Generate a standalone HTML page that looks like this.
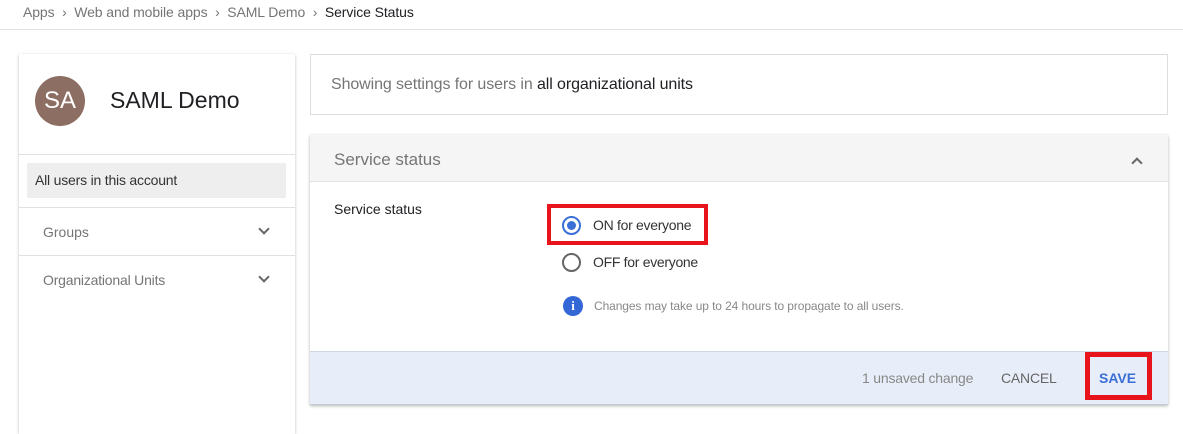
<!DOCTYPE html>
<html><head><style>
*{box-sizing:border-box;margin:0;padding:0}
body{width:1183px;height:420px;overflow:hidden;background:#fff;font-family:"Liberation Sans",sans-serif;position:relative}
.a{position:absolute;white-space:nowrap}
.g{color:#757575}
.chev{position:absolute;width:8px;height:8px;border-right:2px solid #666;border-bottom:2px solid #666;transform:rotate(45deg)}
</style></head><body>
<div class="a" style="left:23px;top:4px;font-size:14px;color:#757575;letter-spacing:-0.1px">Apps&nbsp;&nbsp;›&nbsp;&nbsp;Web and mobile apps&nbsp;&nbsp;›&nbsp;&nbsp;SAML Demo&nbsp;&nbsp;›&nbsp;&nbsp;<span style="color:#202124">Service Status</span></div>
<div class="a" style="left:0;top:29px;width:1183px;height:1px;background:#e0e0e0"></div>

<div class="a" style="left:19px;top:54px;width:276px;height:380px;background:#fff;box-shadow:0 1px 3px rgba(0,0,0,.25)"></div>
<div class="a" style="left:35px;top:76px;width:50px;height:50px;border-radius:50%;background:#8d6e63;color:#fff;font-size:24px;line-height:50px;text-align:center">SA</div>
<div class="a" style="left:110px;top:87px;font-size:23px;color:#202124">SAML Demo</div>
<div class="a" style="left:19px;top:154px;width:276px;height:1px;background:#e0e0e0"></div>
<div class="a" style="left:27px;top:163px;width:259px;height:35px;background:#eeeeee;font-size:14px;color:#333;line-height:35px;padding-left:8px;letter-spacing:-0.2px">All users in this account</div>
<div class="a" style="left:19px;top:207px;width:276px;height:1px;background:#e0e0e0"></div>
<div class="a g" style="left:43px;top:224px;font-size:14px">Groups</div>
<div class="chev" style="left:260px;top:225px"></div>
<div class="a" style="left:19px;top:255px;width:276px;height:1px;background:#e0e0e0"></div>
<div class="a g" style="left:43px;top:272px;font-size:14px;letter-spacing:-0.2px">Organizational Units</div>
<div class="chev" style="left:260px;top:273px"></div>

<div class="a" style="left:310px;top:54px;width:858px;height:61px;border:1px solid #ddd"></div>
<div class="a" style="left:331px;top:76px;font-size:16px;color:#757575;letter-spacing:-0.1px">Showing settings for users in <span style="color:#202124">all organizational units</span></div>

<div class="a" style="left:310px;top:135px;width:858px;height:270px;background:#fff;box-shadow:0 1px 3px rgba(0,0,0,.3)"></div>
<div class="a" style="left:310px;top:135px;width:858px;height:47px;background:#f5f5f5;border-bottom:1px solid #e0e0e0"></div>
<div class="a g" style="left:334px;top:150px;font-size:17px">Service status</div>
<div class="chev" style="left:1133px;top:159px;transform:rotate(225deg)"></div>
<div class="a" style="left:334px;top:201px;font-size:14px;color:#202124">Service status</div>
<div class="a" style="left:547px;top:204px;width:161px;height:41px;border:4px solid #e8141c"></div>
<div class="a" style="left:562px;top:216px;width:19px;height:19px;border-radius:50%;border:2px solid #3a6fd8"></div>
<div class="a" style="left:567px;top:221px;width:9px;height:9px;border-radius:50%;background:#3a6fd8"></div>
<div class="a" style="left:593px;top:217px;font-size:14px;color:#333;letter-spacing:-0.3px">ON for everyone</div>
<div class="a" style="left:562px;top:253px;width:19px;height:19px;border-radius:50%;border:2px solid #666"></div>
<div class="a" style="left:593px;top:254px;font-size:14px;color:#333;letter-spacing:-0.3px">OFF for everyone</div>
<div class="a" style="left:563px;top:296px;width:20px;height:20px;border-radius:50%;background:#3367d6;color:#fff;font-size:13px;font-weight:bold;text-align:center;line-height:20px;font-family:'Liberation Serif',serif">i</div>
<div class="a" style="left:594px;top:299px;font-size:12px;color:#888;letter-spacing:-0.1px">Changes may take up to 24 hours to propagate to all users.</div>
<div class="a" style="left:310px;top:351px;width:858px;height:54px;background:#e8eef9;border-top:1px solid #d0d7e3;border-bottom:1px solid #c5cbd5"></div>
<div class="a" style="left:862px;top:370px;font-size:14px;color:#888;letter-spacing:-0.2px">1 unsaved change</div>
<div class="a" style="left:1001px;top:370px;font-size:14px;color:#666;letter-spacing:-0.2px">CANCEL</div>
<div class="a" style="left:1085px;top:352px;width:67px;height:48px;border:5px solid #e8141c"></div>
<div class="a" style="left:1099px;top:370px;font-size:14px;color:#3a6fd8;font-weight:bold">SAVE</div>
</body></html>
